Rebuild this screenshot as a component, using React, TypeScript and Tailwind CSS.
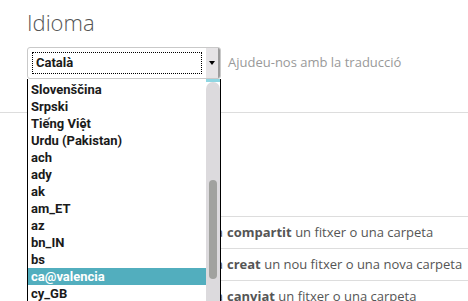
import React from "react";

const languages = [
  "Slovenščina",
  "Srpski",
  "Tiếng Việt",
  "Urdu (Pakistan)",
  "ach",
  "ady",
  "ak",
  "am_ET",
  "az",
  "bn_IN",
  "bs",
  "ca@valencia",
  "cy_GB",
  "de_AT",
];

const activities = [
  { verb: "compartit", rest: "un fitxer o una carpeta" },
  { verb: "creat", rest: "un nou fitxer o una nova carpeta" },
  { verb: "canviat", rest: "un fitxer o una carpeta" },
];

const LanguageList = () => {
  return (
    <div className="absolute left-[27px] top-[79px] w-[194px] h-[240px] bg-white border-x border-black flex font-['Roboto','Liberation_Sans',sans-serif]">
      <ul className="flex-1 pt-[2px] overflow-hidden">
        {languages.map((lang) => (
          <li
            key={lang}
            className={
              lang === "ca@valencia"
                ? "h-[17px] leading-[17px] pl-[3px] text-[13px] font-bold text-white bg-[#52aebe]"
                : "h-[17px] leading-[17px] pl-[3px] text-[13px] font-bold text-[#1a1a1a]"
            }
          >
            {lang}
          </li>
        ))}
      </ul>
      {/* scrollbar */}
      <div className="w-[14px] flex flex-col">
        <div className="h-[3px] bg-[#8fd6e2]" />
        <div className="flex-1 bg-[#dcdadd] rounded-t-[7px] pt-[98px] px-[3px]">
          <div className="h-[99px] rounded-[4px] bg-[#a1a29f]" />
        </div>
      </div>
    </div>
  );
};

const App = () => {
  return (
    <div className="relative w-[468px] h-[301px] overflow-hidden bg-white font-['Open_Sans',sans-serif] text-[#555]">
      <div className="px-[27px]">
        <h2 className="pt-[7px] text-[22px] leading-[30px] font-light text-[#555]">Idioma</h2>
        <div className="mt-[10px] flex items-center gap-[7px]">
          <div className="w-[194px] h-[32px] flex bg-white border border-[#c9c9c9] rounded-[3px]">
            <div className="flex-1 p-[4px]">
              <div className="h-full border border-dotted border-black flex items-center pl-[3px] text-[13px] font-bold text-[#1a1a1a] font-['Roboto','Liberation_Sans',sans-serif]">
                Català
              </div>
            </div>
            <div className="w-[14px] bg-[#e6e4e6] border-r-2 border-[#9c9c9c] flex items-center justify-center rounded-r-[2px]">
              <span className="w-0 h-0 border-x-[3px] border-x-transparent border-t-[4px] border-t-black" />
            </div>
          </div>
          <span className="text-[13px] text-[#999]">Ajudeu-nos amb la traducció</span>
        </div>
      </div>

      {/* section divider; its heading sits behind the open list */}
      <div className="mt-[33px] h-[104px] border-t border-[#ddd]" />

      <div className="pl-[27px]">
        {activities.map((a) => (
          <div key={a.verb} className="h-[32px] border-t border-[#ddd] flex items-center pl-[170px] text-[13px] text-[#555] whitespace-nowrap">
            <span className="inline-block w-[26px] text-right">S'ha</span>
            <span className="ml-[4px]">
              <strong className="font-bold">{a.verb}</strong> {a.rest}
            </span>
          </div>
        ))}
      </div>

      <LanguageList />
    </div>
  );
};

export default App;
